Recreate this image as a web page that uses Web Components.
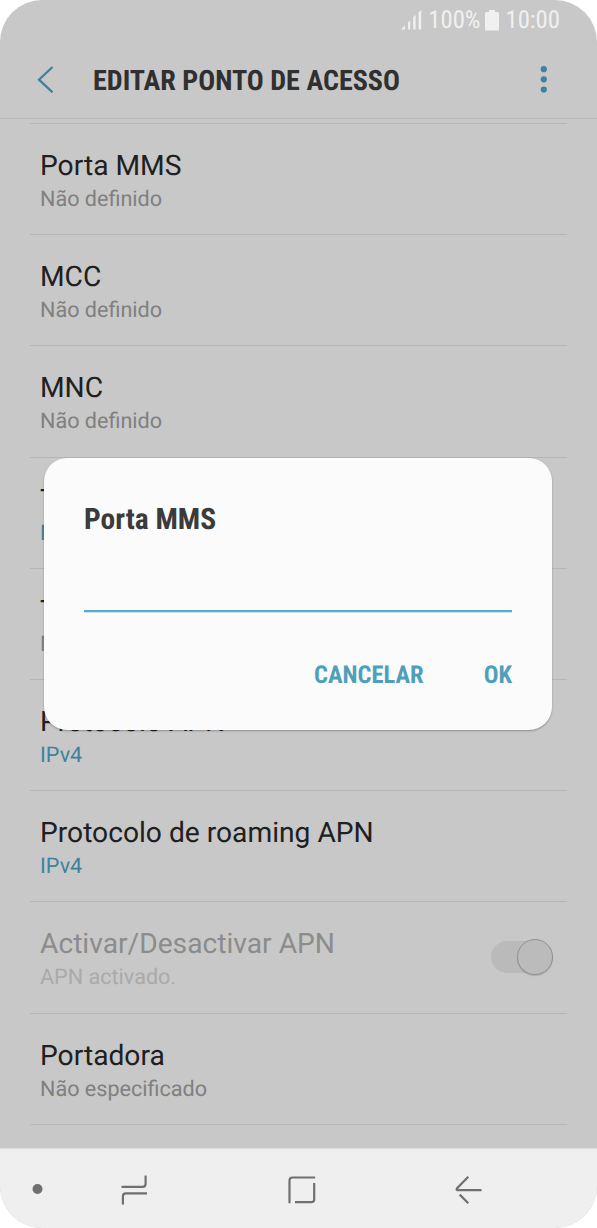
<!DOCTYPE html>
<html lang="pt">
<head>
<meta charset="utf-8">
<title>Editar ponto de acesso</title>
<style>
    body {
        margin: 0;
        background: #fff;
        font-family: Roboto, sans-serif;
        text-rendering: geometricPrecision;
    }
</style>
</head>
<body>
<phone-screen>
    <status-bar slot="top" battery="100%" time="10:00"></status-bar>
    <app-header slot="top">EDITAR PONTO DE ACESSO</app-header>

    <pref-item summary="Não definido">Porta MMS</pref-item>
    <pref-item summary="Não definido">MCC</pref-item>
    <pref-item summary="Não definido">MNC</pref-item>
    <pref-item summary="N" accent>T</pref-item>
    <pref-item summary="N">T</pref-item>
    <pref-item summary="IPv4" accent>Protocolo APN</pref-item>
    <pref-item summary="IPv4" accent>Protocolo de roaming APN</pref-item>
    <pref-item summary="APN activado." disabled>Activar/Desactivar APN<toggle-switch slot="widget"></toggle-switch></pref-item>
    <pref-item summary="Não especificado">Portadora</pref-item>

    <input-dialog slot="dialog" heading="Porta MMS">
        <dialog-button>CANCELAR</dialog-button>
        <dialog-button>OK</dialog-button>
    </input-dialog>
    <nav-bar slot="bottom"></nav-bar>
</phone-screen>

<script>
class BaseElement extends HTMLElement {
    constructor() {
        super();
        this.attachShadow({ mode: 'open' });
    }

    connectedCallback() {
        this.shadowRoot.innerHTML = this.render();
    }
}

class PhoneScreen extends BaseElement {
    render() {
        return `
            <style>
                :host {
                    position: relative;
                    display: flex;
                    flex-direction: column;
                    width: 597px;
                    height: 1228px;
                    overflow: hidden;
                    border-radius: 42px;
                    background: #c8c8c8;
                }
                .list {
                    flex: 1;
                    min-height: 0;
                    overflow: hidden;
                    padding: 4px 30px 0;
                }
            </style>
            <slot name="top"></slot>
            <div class="list"><slot></slot></div>
            <slot name="bottom"></slot>
            <slot name="dialog"></slot>
        `;
    }
}

class StatusBar extends BaseElement {
    render() {
        return `
            <style>
                :host {
                    display: flex;
                    justify-content: flex-end;
                    align-items: center;
                    height: 40px;
                    padding-right: 37px;
                    box-sizing: border-box;
                    color: #f0f0f0;
                    font: 24.7px/38px "Roboto Condensed", Roboto, sans-serif;
                    font-stretch: 75%;
                }
                span { padding-top: 2px; }
                .signal { margin-right: 6px; }
                .battery { margin: 0 6px 0 5px; }
            </style>
            <svg class="signal" width="21" height="20" viewBox="0 0 21 20" fill="#f0f0f0">
                <path d="M0 19.5 4 15.2V19.5ZM7 12.5 9.2 10.5V19.5H7ZM12.2 7.2 14.6 5V19.5H12.2ZM17.6 2.5 20.2 0V19.5H17.6Z"/>
            </svg>
            <span>${this.getAttribute('battery')}</span>
            <svg class="battery" width="14" height="21" viewBox="0 0 14 21" fill="#f0f0f0">
                <path d="M4 0H10V2H12.5Q14 2 14 3.5V19Q14 20.5 12.5 20.5H1.5Q0 20.5 0 19V3.5Q0 2 1.5 2H4Z"/>
            </svg>
            <span>${this.getAttribute('time')}</span>
        `;
    }
}

class AppHeader extends BaseElement {
    render() {
        return `
            <style>
                :host {
                    display: flex;
                    align-items: center;
                    height: 79px;
                    padding: 0 50px 0 37px;
                    box-sizing: border-box;
                    border-bottom: 1px solid #b8b8b8;
                    color: #303030;
                    font: bold 28.1px/80px "Roboto Condensed", Roboto, sans-serif;
                    font-stretch: 75%;
                }
                h1 {
                    flex: 1;
                    margin: 4px 0 0 39px;
                    font: inherit;
                    white-space: nowrap;
                }
            </style>
            <svg width="17" height="28" viewBox="0 0 17 28" fill="none" stroke="#3f829c" stroke-width="2.3">
                <path d="M15.5 2 2 14.7 15.5 27.3"/>
            </svg>
            <h1><slot></slot></h1>
            <svg width="7" height="28" viewBox="0 0 7 28" fill="#3f829c">
                <circle cx="3.8" cy="4.2" r="3.1"/>
                <circle cx="3.8" cy="14.3" r="3.1"/>
                <circle cx="3.8" cy="24.5" r="3.1"/>
            </svg>
        `;
    }
}

class PrefItem extends BaseElement {
    render() {
        return `
            <style>
                :host {
                    display: flex;
                    align-items: center;
                    justify-content: space-between;
                    height: 111.2px;
                    padding: 0 14px 0 10px;
                    box-sizing: border-box;
                    border-top: 1px solid #b5b5b5;
                    color: #202020;
                }
                :host(:last-of-type) {
                    height: 112.2px;
                    border-bottom: 1px solid #b9b9b9;
                }
                .text { padding-top: 7px; }
                .title {
                    font-size: 28.2px;
                    line-height: 34px;
                    white-space: nowrap;
                }
                .summary {
                    color: #808080;
                    font-size: 21.6px;
                    line-height: 33px;
                }
                :host([accent]) .summary { color: #3f829c; }
                :host([disabled]) .title { color: #8c8c8c; }
                :host([disabled]) .summary { color: #aaa; }
            </style>
            <div class="text">
                <div class="title"><slot></slot></div>
                <div class="summary">${this.getAttribute('summary')}</div>
            </div>
            <slot name="widget"></slot>
        `;
    }
}

class ToggleSwitch extends BaseElement {
    render() {
        return `
            <style>
                :host {
                    display: flex;
                    justify-content: flex-end;
                    align-items: center;
                    width: 62px;
                    height: 32px;
                    border-radius: 16px;
                    background: #bababa;
                }
                .thumb {
                    flex: none;
                    width: 36px;
                    height: 36px;
                    box-sizing: border-box;
                    border: 1px solid #929292;
                    border-radius: 50%;
                    background: #bbb;
                    box-shadow: 0 1px 1px rgba(0, 0, 0, .15);
                }
            </style>
            <div class="thumb"></div>
        `;
    }
}

class InputDialog extends BaseElement {
    render() {
        return `
            <style>
                :host {
                    position: absolute;
                    left: 44px;
                    top: 457.5px;
                    display: flex;
                    flex-direction: column;
                    width: 508px;
                    height: 272.5px;
                    padding: 40px 40px 0;
                    box-sizing: border-box;
                    border-radius: 23px;
                    background: #fbfbfb;
                    box-shadow: 0 1px 2px rgba(0, 0, 0, .3);
                    font-family: "Roboto Condensed", Roboto, sans-serif;
                    font-stretch: 75%;
                }
                h2 {
                    margin: 0;
                    color: #3b3b3b;
                    font-size: 29.5px;
                    line-height: 44px;
                }
                .field {
                    height: 68px;
                    border-bottom: 2px solid #58acc8;
                    box-shadow: 0 .5px 0 #9dcddd;
                }
                .actions {
                    display: flex;
                    justify-content: flex-end;
                    gap: 60px;
                    margin-top: 43px;
                }
            </style>
            <h2>${this.getAttribute('heading')}</h2>
            <div class="field"></div>
            <div class="actions"><slot></slot></div>
        `;
    }
}

class DialogButton extends BaseElement {
    render() {
        return `
            <style>
                :host {
                    display: block;
                    color: #4f9fbb;
                    font-size: 24.5px;
                    font-weight: bold;
                    line-height: 40px;
                }
            </style>
            <slot></slot>
        `;
    }
}

class NavBar extends BaseElement {
    render() {
        return `
            <style>
                :host {
                    display: flex;
                    align-items: center;
                    height: 80px;
                    padding: 3px 115px 0 32px;
                    box-sizing: border-box;
                    border-top: 1px solid #dedede;
                    background: #efefef;
                }
                svg {
                    fill: none;
                    stroke: #707070;
                    stroke-width: 2.2;
                }
                .dot { fill: #707070; stroke: none; }
                .recent { margin-left: 78px; }
                .home { margin-left: 140px; }
                .back { margin-left: auto; }
            </style>
            <svg class="dot" width="11" height="12"><circle cx="5.5" cy="5" r="5"/></svg>
            <svg class="recent" width="27" height="30" viewBox="0 0 27 30">
                <path d="M.5 11.9H21.5Q24.6 11.9 24.6 8.8V.5M26 18.4H5Q1.9 18.4 1.9 21.5V29.5"/>
            </svg>
            <svg class="home" width="28" height="28" viewBox="0 0 28 28">
                <path d="M1.5 27.2V4.4Q1.5 1.5 4.4 1.5H27.2M26.2 7V23.2Q26.2 26.2 23.2 26.2H7"/>
            </svg>
            <svg class="back" width="27" height="28" viewBox="0 0 27 28">
                <path d="M13.3.8 1.9 12.5Q1 14.2 2.8 14.2H26.5M4.7 18.6 13.3 27.2"/>
            </svg>
        `;
    }
}

customElements.define('phone-screen', PhoneScreen);
customElements.define('status-bar', StatusBar);
customElements.define('app-header', AppHeader);
customElements.define('pref-item', PrefItem);
customElements.define('toggle-switch', ToggleSwitch);
customElements.define('input-dialog', InputDialog);
customElements.define('dialog-button', DialogButton);
customElements.define('nav-bar', NavBar);
</script>
</body>
</html>
